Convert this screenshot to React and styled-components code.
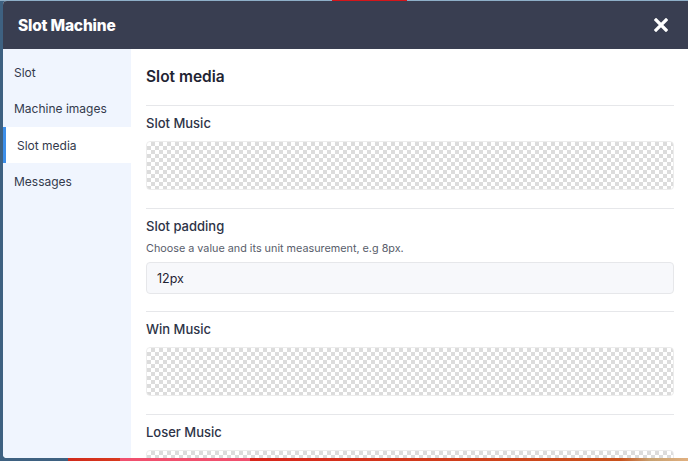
import React from 'react'
import styled, { createGlobalStyle } from 'styled-components'

const GlobalStyle = createGlobalStyle`
  html, body {
    margin: 0;
    padding: 0;
    height: 100%;
  }
  body {
    font-family: Inter, "Noto Sans", "Liberation Sans", sans-serif;
    background:
      linear-gradient(to right, transparent 332px, #d4161b 332px, #d4161b 407px, transparent 407px) top / 100% 1px no-repeat,
      linear-gradient(to right, #3e6181 0 68px, #d02a1c 68px, #d9391e 120px, #f0506e 120px, #f0506e 250px, #d9251c 250px, #c9521c 620px, #c8a070 650px, #e0b080 100%) bottom / 100% 3px no-repeat,
      linear-gradient(to bottom, #8eafc8 0 1px, #3e6181 1px);
    overflow: hidden;
  }
`

const sections = ['Slot', 'Machine images', 'Slot media', 'Messages']

function Close() {
  return (
    <CloseButton>
      <svg width="14" height="14" viewBox="0 0 14 14">
        <path d="M2 2 L12 12 M12 2 L2 12" stroke="#fff" strokeWidth="3.2" strokeLinecap="square" />
      </svg>
    </CloseButton>
  )
}

function MediaField({ label }) {
  return (
    <Field>
      <Label>{label}</Label>
      <Checker />
    </Field>
  )
}

export default function App() {
  return (
    <>
      <GlobalStyle />
      <Modal>
        <Header>
          <Title>Slot Machine</Title>
          <Close />
        </Header>
        <Body>
          <Sidebar>
            {sections.map((s) => (
              <NavItem key={s} active={s === 'Slot media'}>{s}</NavItem>
            ))}
          </Sidebar>
          <Content>
            <Heading>Slot media</Heading>
            <MediaField label="Slot Music" />
            <Field>
              <Label>Slot padding</Label>
              <Help>Choose a value and its unit measurement, e.g 8px.</Help>
              <Input defaultValue="12px" />
            </Field>
            <MediaField label="Win Music" />
            <MediaField label="Loser Music" />
          </Content>
        </Body>
      </Modal>
    </>
  )
}

const Modal = styled.div`
  margin: 1px 0 0 3px;
  width: 700px;
  height: 457px;
  display: flex;
  flex-direction: column;
  background: #fff;
  border-radius: 4px 0 0 4px;
  overflow: hidden;
`
const Header = styled.div`
  height: 48px;
  flex-shrink: 0;
  background: #393e51;
  display: flex;
  align-items: center;
  justify-content: space-between;
  padding: 0 0 0 15px;
  width: 685px;
  box-sizing: border-box;
`
const Title = styled.h1`
  margin: 0;
  color: #fff;
  font-size: 15.5px;
  font-weight: 800;
  letter-spacing: -0.2px;
`
const CloseButton = styled.div`
  width: 14px;
  height: 14px;
  margin-right: 20px;
  display: flex;
`
const Body = styled.div`
  flex: 1;
  display: flex;
  min-height: 0;
`
const Sidebar = styled.nav`
  width: 128px;
  flex-shrink: 0;
  background: #f0f5fe;
  padding-top: 5px;
  display: flex;
  flex-direction: column;
`
const NavItem = styled.div`
  height: 36px;
  margin-top: ${(p) => (p.active ? '1px' : '0')};
  display: flex;
  align-items: center;
  font-size: 12px;
  color: #333a4c;
  background: ${(p) => (p.active ? '#fff' : 'transparent')};
  border-left: 3px solid ${(p) => (p.active ? '#3d8ee8' : 'transparent')};
  padding-left: ${(p) => (p.active ? '11px' : '8px')};
`
const Content = styled.div`
  width: 557px;
  box-sizing: border-box;
  padding: 16px 14px 0 15px;
  overflow: hidden;
`
const Heading = styled.h2`
  margin: 0;
  height: 23px;
  line-height: 23px;
  font-size: 15.5px;
  font-weight: 600;
  color: #1f2433;
  padding-bottom: 17px;
  border-bottom: 1px solid #e6e7ea;
`
const Field = styled.div`
  padding: 7px 0 18px;
  border-bottom: 1px solid #e6e7ea;
`
const Label = styled.div`
  font-size: 13px;
  line-height: 20px;
  font-weight: 500;
  color: #2d3347;
  margin-bottom: 8px;
`
const Help = styled.div`
  font-size: 10.8px;
  line-height: 16px;
  color: #585d6b;
  margin: -3px 0 5px;
`
const Checker = styled.div`
  height: 49px;
  border-radius: 4px;
  border: 1px solid #ececec;
  box-sizing: border-box;
  background-color: #fff;
  background-image:
    linear-gradient(45deg, #dcdcdc 25%, transparent 25%, transparent 75%, #dcdcdc 75%),
    linear-gradient(45deg, #dcdcdc 25%, transparent 25%, transparent 75%, #dcdcdc 75%);
  background-size: 8px 8px;
  background-position: 0 0, 4px 4px;
`
const Input = styled.input`
  display: block;
  width: 100%;
  height: 32px;
  margin-bottom: -1px;
  box-sizing: border-box;
  border: 1px solid #e6e7ea;
  border-radius: 4px;
  background: #f7f8fb;
  padding: 0 10px;
  font-family: inherit;
  font-size: 12.5px;
  color: #1f2433;
  outline: none;
`
